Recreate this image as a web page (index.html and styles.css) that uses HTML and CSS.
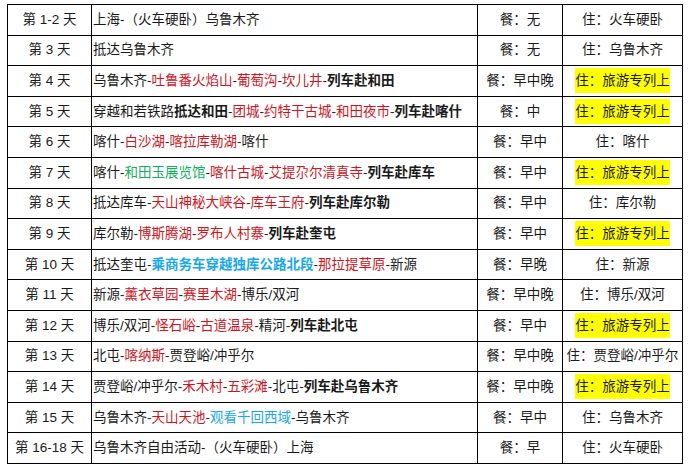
FILE: index.html
```html
<!DOCTYPE html>
<html lang="zh-CN">
<head>
<meta charset="utf-8">
<link rel="stylesheet" href="styles.css">
</head>
<body>
<table class="plan">
  <colgroup>
    <col class="c-day"><col class="c-route"><col class="c-meal"><col class="c-stay">
  </colgroup>
  <tr><td class="day">第 1-2 天</td><td class="route">上海-（火车硬卧）乌鲁木齐</td><td class="meal">餐：无</td><td class="stay">住：火车硬卧</td></tr>
  <tr><td class="day">第 3 天</td><td class="route">抵达乌鲁木齐</td><td class="meal">餐：无</td><td class="stay">住：乌鲁木齐</td></tr>
  <tr><td class="day">第 4 天</td><td class="route">乌鲁木齐-<span class="r">吐鲁番火焰山</span>-<span class="r">葡萄沟</span>-<span class="r">坎儿井</span>-<b>列车赴和田</b></td><td class="meal">餐：早中晚</td><td class="stay"><span class="hl">住：旅游专列上</span></td></tr>
  <tr><td class="day">第 5 天</td><td class="route">穿越和若铁路<b>抵达和田</b>-<span class="r">团城</span>-<span class="r">约特干古城</span>-<span class="r">和田夜市</span>-<b>列车赴喀什</b></td><td class="meal">餐：中</td><td class="stay"><span class="hl">住：旅游专列上</span></td></tr>
  <tr><td class="day">第 6 天</td><td class="route">喀什-<span class="r">白沙湖</span>-<span class="r">喀拉库勒湖</span>-喀什</td><td class="meal">餐：早中</td><td class="stay">住：喀什</td></tr>
  <tr><td class="day">第 7 天</td><td class="route">喀什-<span class="g">和田玉展览馆</span>-<span class="r">喀什古城</span>-<span class="r">艾提尕尔清真寺</span>-<b>列车赴库车</b></td><td class="meal">餐：早中</td><td class="stay"><span class="hl">住：旅游专列上</span></td></tr>
  <tr><td class="day">第 8 天</td><td class="route">抵达库车-<span class="r">天山神秘大峡谷</span>-<span class="r">库车王府</span>-<b>列车赴库尔勒</b></td><td class="meal">餐：早中</td><td class="stay">住：库尔勒</td></tr>
  <tr><td class="day">第 9 天</td><td class="route">库尔勒-<span class="r">博斯腾湖</span>-<span class="r">罗布人村寨</span>-<b>列车赴奎屯</b></td><td class="meal">餐：早中</td><td class="stay"><span class="hl">住：旅游专列上</span></td></tr>
  <tr><td class="day">第 10 天</td><td class="route">抵达奎屯-<b class="bl">乘商务车穿越独库公路北段</b>-<span class="r">那拉提草原</span>-新源</td><td class="meal">餐：早晚</td><td class="stay">住：新源</td></tr>
  <tr><td class="day">第 11 天</td><td class="route">新源-<span class="r">薰衣草园</span>-<span class="r">赛里木湖</span>-博乐/双河</td><td class="meal">餐：早中晚</td><td class="stay">住：博乐/双河</td></tr>
  <tr><td class="day">第 12 天</td><td class="route">博乐/双河-<span class="r">怪石峪</span>-<span class="r">古道温泉</span>-精河-<b>列车赴北屯</b></td><td class="meal">餐：早中</td><td class="stay"><span class="hl">住：旅游专列上</span></td></tr>
  <tr><td class="day">第 13 天</td><td class="route">北屯-<span class="r">喀纳斯</span>-贾登峪/冲乎尔</td><td class="meal">餐：早中晚</td><td class="stay">住：贾登峪/冲乎尔</td></tr>
  <tr><td class="day">第 14 天</td><td class="route">贾登峪/冲乎尔-<span class="r">禾木村</span>-<span class="r">五彩滩</span>-北屯-<b>列车赴乌鲁木齐</b></td><td class="meal">餐：早中晚</td><td class="stay"><span class="hl">住：旅游专列上</span></td></tr>
  <tr><td class="day">第 15 天</td><td class="route">乌鲁木齐-<span class="r">天山天池</span>-<span class="bl">观看千回西域</span>-乌鲁木齐</td><td class="meal">餐：早中</td><td class="stay">住：乌鲁木齐</td></tr>
  <tr><td class="day">第 16-18 天</td><td class="route">乌鲁木齐自由活动-（火车硬卧）上海</td><td class="meal">餐：早</td><td class="stay">住：火车硬卧</td></tr>
</table>
</body>
</html>
```

FILE: styles.css
```css
html, body {
  margin: 0;
  padding: 0;
  background: #fff;
}
body {
  padding: 4px 0 0 7px;
  font-family: "Liberation Sans", "Noto Sans CJK SC", sans-serif;
  font-size: 13.5px;
  color: #1a1a1a;
}
.plan {
  border-collapse: collapse;
  table-layout: fixed;
  width: 675px;
}
.c-day { width: 84px; }
.c-route { width: 386px; }
.c-meal { width: 85px; }
.c-stay { width: 120px; }
.plan tr { height: 30.6px; }
.plan td {
  border: 1px solid #000;
  padding: 0 1px;
  line-height: 20px;
  white-space: nowrap;
  overflow: hidden;
  vertical-align: middle;
}
.day, .meal, .stay { text-align: center; }
.route { text-align: left; }
.route { word-spacing: 0; }
.r { color: #d0141c; }
.g { color: #10b060; }
.bl { color: #18a8e8; }
b { font-weight: bold; }
.hl {
  background: #ffff00;
  display: inline-block;
  line-height: 25px;
  padding: 0;
  vertical-align: middle;
}
```
